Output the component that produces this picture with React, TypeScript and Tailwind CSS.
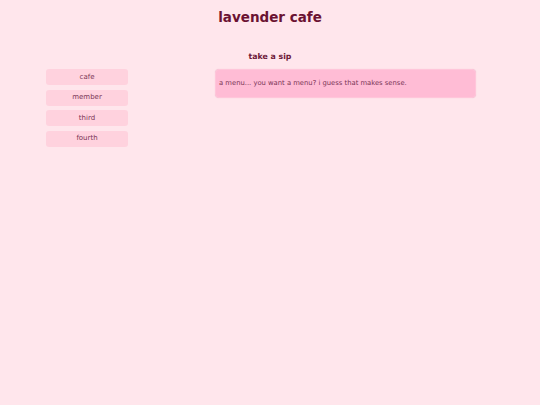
import React from "react";

const links = ["cafe", "member", "third", "fourth"];

export default function App() {
  return (
    <div
      className="min-h-[405px] w-full bg-[#ffe6ec] text-[#6d1838]"
      style={{ fontFamily: '"DejaVu Sans", sans-serif' }}
    >
      {/* Header */}
      <h1 className="pt-[9px] text-center text-[13.5px] font-bold leading-[16px] text-[#6b1232]">
        lavender cafe
      </h1>
      <h3 className="mt-[27px] text-center text-[7.8px] font-bold leading-[10px]">take a sip</h3>

      <div className="mt-[7px] flex items-start pl-[46px]">
        {/* Sidebar */}
        <nav className="flex w-[82px] flex-col gap-[4.5px]">
          {links.map((l) => (
            <div
              key={l}
              className="flex h-[16px] items-center justify-center rounded-[3px] bg-[#ffd2de] text-[7px] text-[#7a3555]"
            >
              {l}
            </div>
          ))}
        </nav>

        {/* Main */}
        <main className="ml-[87px] w-[261px]">
          <div className="flex h-[29px] items-center rounded-[4px] border border-[#ffc6da] bg-[#ffbcd5] px-[3px] text-[6.8px] text-[#7a3555] shadow-[0_0_1px_rgba(200,100,140,0.3)]">
            a menu... you want a menu? i guess that makes sense.
          </div>
        </main>
      </div>
    </div>
  );
}
